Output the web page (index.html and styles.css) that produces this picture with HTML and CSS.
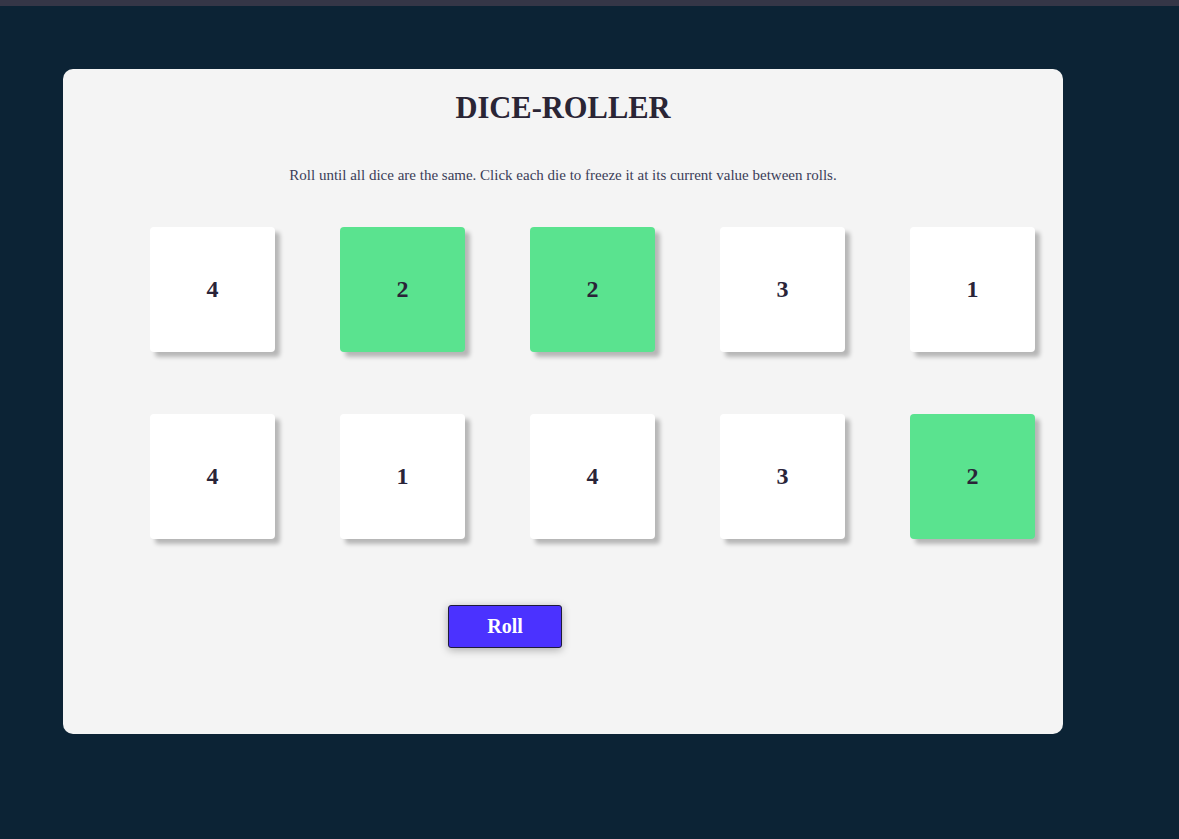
FILE: index.html
```html
<!DOCTYPE html>
<html>
<head>
<meta charset="utf-8">
<title>Dice Roller</title>
<link rel="stylesheet" href="styles.css">
</head>
<body>
<div class="topbar"></div>
<main class="card">
  <h1 class="title">DICE-ROLLER</h1>
  <p class="subtitle">Roll until all dice are the same. Click each die to freeze it at its current value between rolls.</p>
  <div class="dice-grid">
    <div class="die">4</div>
    <div class="die held">2</div>
    <div class="die held">2</div>
    <div class="die">3</div>
    <div class="die">1</div>
    <div class="die">4</div>
    <div class="die">1</div>
    <div class="die">4</div>
    <div class="die">3</div>
    <div class="die held">2</div>
  </div>
  <div class="actions">
    <button class="roll-btn">Roll</button>
  </div>
</main>
</body>
</html>
```
FILE: styles.css
```css
* { box-sizing: border-box; }
html, body {
  margin: 0;
  padding: 0;
  background: #0c2335;
  font-family: "Liberation Serif", "Times New Roman", serif;
}
.topbar {
  height: 6px;
  background: #353647;
}
.card {
  margin: 63px 0 0 63px;
  width: 1000px;
  height: 665px;
  background: #f4f4f4;
  border-radius: 10px;
  padding: 19px 0 0 87px;
}
.title {
  margin: 0 0 0 -87px;
  text-align: center;
  font-size: 30.5px;
  line-height: 40px;
  font-weight: bold;
  color: #2a2535;
}
.subtitle {
  margin: 37px 0 0 -87px;
  text-align: center;
  font-size: 15px;
  line-height: 20px;
  color: #3b3d58;
}
.dice-grid {
  margin-top: 42px;
  display: grid;
  grid-template-columns: repeat(5, 125px);
  grid-auto-rows: 125px;
  column-gap: 65px;
  row-gap: 62px;
}
.die {
  background: #ffffff;
  border-radius: 4px;
  box-shadow: 5px 5px 4px rgba(0, 0, 0, 0.25);
  display: flex;
  align-items: center;
  justify-content: center;
  font-size: 24px;
  font-weight: bold;
  color: #2a2438;
}
.die.held {
  background: #5ae38f;
}
.actions {
  margin-top: 66px;
  padding-left: 298px;
}
.roll-btn {
  width: 114px;
  height: 43px;
  background: #4b32ff;
  color: #ffffff;
  border: 1px solid #1f1b3a;
  border-radius: 3px;
  box-shadow: 0 2px 8px rgba(0, 0, 0, 0.3);
  font-family: "Liberation Serif", "Times New Roman", serif;
  font-size: 20px;
  font-weight: bold;
  cursor: pointer;
}
```
